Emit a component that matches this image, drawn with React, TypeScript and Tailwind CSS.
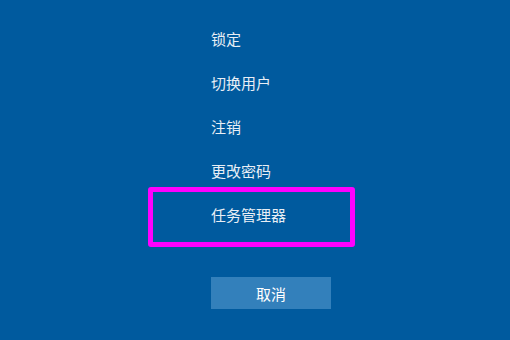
import React from 'react';

const items = ['锁定', '切换用户', '注销', '更改密码', '任务管理器'];

export default function App() {
  return (
    <div
      className="w-[510px] h-[340px] bg-[#005a9e] overflow-hidden"
      style={{ fontFamily: '"Microsoft YaHei", "Noto Sans CJK SC", "Noto Sans", sans-serif' }}
    >
      <div className="flex flex-col pl-[211px] pt-[16px]">
        {items.map((label, i) => (
          <div key={label} className="relative h-[44px] flex items-center">
            <span className="text-[15px] leading-none text-[#e8eef5]">{label}</span>
            {i === items.length - 1 && (
              <div className="absolute left-[-63px] top-[-5px] w-[207px] h-[60px] border-[5px] border-[#ff00ff] rounded-[3px]" />
            )}
          </div>
        ))}
        <button className="mt-[41px] w-[120px] h-[32px] bg-[#3380bb] text-white text-[15px] leading-none flex items-center justify-center">
          取消
        </button>
      </div>
    </div>
  );
}
